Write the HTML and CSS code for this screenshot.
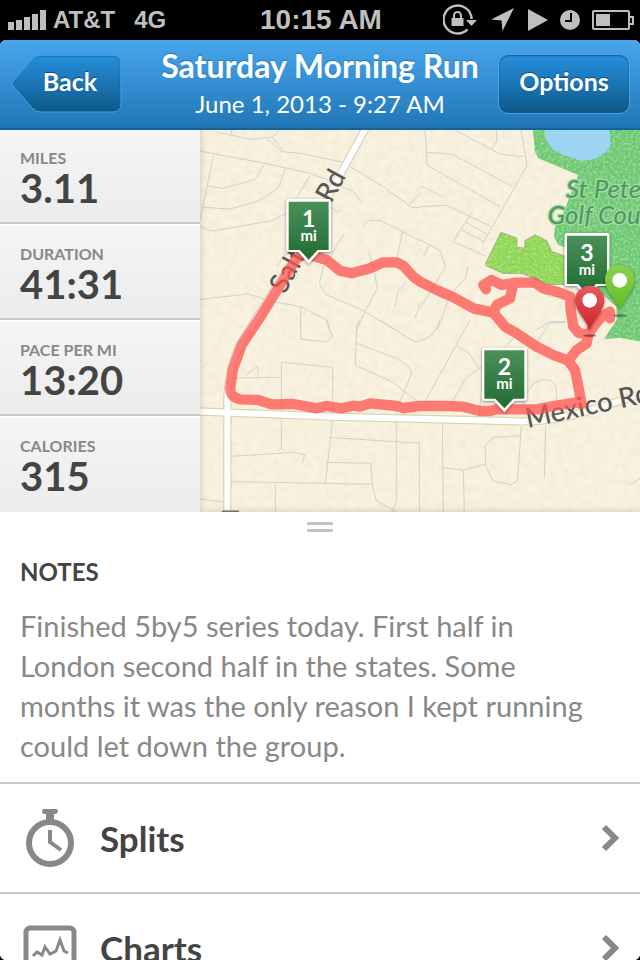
FILE: index.html
```html
<!DOCTYPE html>
<html lang="en">
<head>
<meta charset="utf-8">
<meta name="viewport" content="width=device-width, initial-scale=1">
<title>Saturday Morning Run</title>
<link rel="stylesheet" href="styles.css">
</head>
<body>
<div class="screen">
  <div class="status">
    <div class="status-left">
      <svg class="signal" width="38" height="20" viewBox="0 0 38 20" aria-hidden="true"><path d="M0 12h6v8H0zM8 10h6v10H8zM16 7h6v13h-6zM24 4h6v16h-6zM32 0h6v20h-6z"/></svg>
      <span>AT&amp;T</span>
      <span class="network">4G</span>
    </div>
    <div class="clock">10:15 AM</div>
    <div class="status-right">
      <svg width="36" height="32" viewBox="0 0 36 32" aria-hidden="true"><path d="M28.600 15A14 14 0 1 0 24.500 25.400" fill="none" stroke="#bfbfbf" stroke-width="2.400"/><path d="M23 16h11l-5.500 6z"/><path d="M8.500 14h12v8h-12z"/><path d="M11 14v-2.500a3.500 3.500 0 0 1 7 0V14" fill="none" stroke="#bfbfbf" stroke-width="2"/></svg>
      <svg width="25" height="24" viewBox="0 0 25 24" aria-hidden="true"><path d="M23 0L11.500 23L10.500 12.500L0 11.500z"/></svg>
      <svg width="20" height="22" viewBox="0 0 20 22" aria-hidden="true"><path d="M0 0l20 11L0 22z"/></svg>
      <svg width="20" height="20" viewBox="0 0 20 20" aria-hidden="true"><circle cx="10" cy="10" r="10"/><path d="M11 3v8H5" fill="none" stroke="#000" stroke-width="2"/></svg>
      <svg width="42" height="20" viewBox="0 0 42 20" aria-hidden="true"><rect x="1" y="1" width="36" height="18" rx="1" fill="none" stroke="#bfbfbf" stroke-width="2"/><path d="M4 4h14v12H4z"/><path d="M38 7h3v7h-3" fill="none" stroke="#bfbfbf" stroke-width="2"/></svg>
    </div>
  </div>

  <div class="app">
    <header class="navbar">
      <button class="back" type="button">
        <svg class="back-shape" viewBox="0 0 112 60" aria-hidden="true">
          <defs><linearGradient id="backFill" x2="0" y2="1"><stop stop-color="#268fdb"/><stop offset=".5" stop-color="#1b75b5"/><stop offset="1" stop-color="#0d5788"/></linearGradient></defs>
          <path d="M25 2.500Q28 1 31 1H103Q111 1 111 9V50Q111 58 103 58H31Q26 58 23 55L3 32Q1 30 3 27L21 6Q23 3.500 25 2.500Z" fill="url(#backFill)" stroke="#4aa3df" stroke-width="1"/>
          <path d="M25 4.500Q28 2.500 31 2.500H103Q109 2.500 109 9V50" fill="none" stroke="#1869a5" stroke-opacity=".6"/>
        </svg>
        <span class="back-label">Back</span>
      </button>
      <div class="heading">
        <h1>Saturday Morning Run</h1>
        <p>June 1, 2013 - 9:27 AM</p>
      </div>
      <button class="options" type="button">Options</button>
    </header>

    <section class="summary">
      <dl class="stats">
        <div class="stat"><dt>MILES</dt><dd>3.11</dd></div>
        <div class="stat"><dt>DURATION</dt><dd>41:31</dd></div>
        <div class="stat"><dt>PACE PER MI</dt><dd>13:20</dd></div>
        <div class="stat"><dt>CALORIES</dt><dd>315</dd></div>
      </dl>
      <div class="map">
        <svg class="map-art" viewBox="0 0 1320 1146" preserveAspectRatio="xMidYMid slice" role="img" aria-label="Map of the run">
          <defs>
            <linearGradient id="flagFill" x2="0" y2="1"><stop stop-color="#4a9159"/><stop offset="1" stop-color="#226b33"/></linearGradient>
            <linearGradient id="pinRed" x2="0" y2="1"><stop stop-color="#e85a5e"/><stop offset="1" stop-color="#cb2228"/></linearGradient>
            <linearGradient id="pinGreen" x2="0" y2="1"><stop stop-color="#8bd152"/><stop offset="1" stop-color="#62bd20"/></linearGradient>
            <filter id="shade" x="-20%" y="-20%" width="140%" height="150%"><feDropShadow dx="0" dy="3" stdDeviation="4" flood-opacity=".5"/></filter>
            <filter id="paper" x="0" y="0" width="100%" height="100%" color-interpolation-filters="sRGB"><feTurbulence type="fractalNoise" baseFrequency=".045" numOctaves="2" seed="4"/><feColorMatrix values="0 0 0 0 .85  0 0 0 0 .77  0 0 0 0 .58  0 1.400 0 0 -.5"/></filter>
            <filter id="grass" x="0" y="0" width="100%" height="100%" color-interpolation-filters="sRGB"><feTurbulence type="fractalNoise" baseFrequency=".13" numOctaves="2" seed="9" result="n"/><feColorMatrix values="0 0 0 0 .75  0 0 0 0 .95  0 0 0 0 .65  0 1.400 0 0 -.550"/><feComposite in2="SourceGraphic" operator="in" result="t"/><feMerge><feMergeNode in="SourceGraphic"/><feMergeNode in="t"/></feMerge></filter>
            <g id="flag">
              <path d="M-60-190H60Q67-190 67-183V-38Q67-31 60-31H31L0 4L-31-31H-60Q-67-31-67-38V-183Q-67-190-60-190Z" fill="#fff" filter="url(#shade)"/>
              <path d="M-60-182H60V-37H27L0-8L-27-37H-60Z" fill="url(#flagFill)"/>
            </g>
            <path id="pin" d="M0 0C-6-28-44-58-44-91A44 44 0 0 1 44-91C44-58 6-28 0 0Z"/>
          </defs>
          <rect width="1320" height="1146" fill="#f8f2e0"/>
          <rect width="1320" height="1146" filter="url(#paper)" opacity=".2"/>

          <g filter="url(#grass)">
            <path d="M998-9L1005 65L1015 85L1135 135L1090 250L1065 290L1062 320L1075 345L1095 352L1180 470L1250 530L1250 570L1212 627L1260 623L1330 636V-9Z" fill="#6cc676"/>
          </g>
          <path d="M903 308L950 325V352L975 355V333L1005 315L1040 333L1055 365L1092 378L1110 465H1045L970 430L910 430L855 405Z" fill="#8fd452" stroke="#a3ad7b" stroke-width="4" filter="url(#grass)"/>
          <path d="M1033-5L1038 30L1060 60L1090 75L1145 93L1190 85L1220 65L1232 45L1228-5Z" fill="#9dd3f3"/>

          <g class="street">
            <path d="M50 5L60 8L150 28L217 22L237 0M95 0V12M202 27L245 65L300 70L430 97L550 170L635 232H660M217 22L250 62M0 63L195 100L330 130L390 152L460 185L482 215M40 75L22 165L0 270M22 168L70 175L165 148L195 100M10 232L90 237L175 213L235 175L257 112M0 288L35 304L215 272L258 250M330 135L292 200M628 225L660 190M390 230L415 247L425 237M490 288L505 271H540L660 332M607 305L592 382M432 312L390 380L370 410L358 460L375 492L490 542L585 600M505 367L520 405L532 475L495 545L470 600M620 455L595 482L585 530M660 520L645 565M0 508L145 492L220 515L302 530V600M302 530L380 570L388 600M288 370L250 375L232 412M275 435L292 445"/>
            <path transform="translate(660)" d="M15 0L20 65V105L240 230M20 67L97 73L278 170M105 0L240 72L310 80M230 0V35L213 60M303 0L321 107L187 343M0 175L10 170L72 203M0 230L80 226L215 290M152 252L100 335L195 377M137 277L203 313M124 300L190 333M0 330L60 362L77 410L0 535M27 347L10 380M145 408L137 445L90 495L52 600M350 480L390 500H440M350 600L390 575H438"/>
            <path transform="translate(0 570)" d="M302 0V58L380 65L397 52L380 0M480 0L470 20L466 135L580 187L655 247M470 70L590 115Q635 140 635 160L598 250M540 0L642 65H660M103 174L240 172M138 165L172 139L176 165M244 385V127L398 142V300L376 493M235 393L244 383L252 393M90 409L282 397L314 404L307 430M90 485L370 490L517 493M226 490V580M386 352L660 370M376 427L512 430L517 493L528 540L590 577M589 265V545L575 577M658 365V580M0 538L70 545M0 122L5 122"/>
            <path transform="translate(660 570)" d="M0 60Q40 60 60 0M150 0L15 245M110 78L142 95L177 145L138 175L92 255M177 145L205 135L285 50M178 290L182 235M310 257L312 230L340 190L365 180H390L407 198L412 245M340 85L390 8H435M67 305L70 580M70 443L130 450L195 433L219 483L275 494L292 483L305 310M130 450L133 580M303 347L222 352L196 375V433M377 320L373 475M632 495L660 475"/>
          </g>

          <g class="road-edge"><path d="M-10 844L400 860L920 873Q1050 880 1160 845L1330 790M82 1160V830Q80 720 125 635L285 380L505-20"/></g>
          <g class="road"><path d="M-10 844L400 860L920 873Q1050 880 1160 845L1330 790M82 1160V830Q80 720 125 635L285 380L505-20"/></g>
          <path d="M66 1144H117" stroke="#777" stroke-width="5"/>
          <g class="road-name">
            <text transform="translate(254 494) rotate(-61)">Salt</text>
            <text transform="translate(393 222) rotate(-61)">Rd</text>
            <text transform="translate(983 894) rotate(-12)">Mexico Rd</text>
          </g>
          <g class="park-name"><text x="1098" y="205">St Peters</text><text x="1043" y="281">Golf Course</text></g>

          <path class="route" d="M340 378L380 390L420 422L455 430L510 415L550 397H590L610 407L640 440L660 455L710 480L760 502L820 535L880 548L900 572L915 590L950 610L1010 650L1060 675L1105 692L1125 720L1135 770L1145 822L1130 817L1060 828L1010 838H890L870 843H840L790 830L740 828L660 828L610 834L590 828L510 820L480 830L460 827L425 835L380 828L350 835L280 822L215 823L175 810L120 808Q85 800 92 765L98 720L125 645L175 570L290 385L310 375M880 548L890 525L930 505L938 470L945 458M858 478L850 465L875 450L905 465L945 458H1005L1030 475L1070 485L1110 500L1112 540L1120 590L1135 608L1165 615L1180 590L1205 560L1230 545V565M1165 615L1160 640L1130 660L1105 692"/>

          <use href="#flag" x="326" y="397"/>
          <use href="#flag" x="913" y="843"/>
          <use href="#flag" x="1161" y="499"/>
          <g class="flag-text">
            <text class="flag-number" x="326" y="290">1</text><text class="flag-unit" x="326" y="332">mi</text>
            <text class="flag-number" x="913" y="735">2</text><text class="flag-unit" x="913" y="777">mi</text>
            <text class="flag-number" x="1161" y="392">3</text><text class="flag-unit" x="1161" y="434">mi</text>
          </g>
          <ellipse cx="1259" cy="557" rx="20" ry="4" opacity=".4"/>
          <use href="#pin" x="1259" y="540" fill="url(#pinGreen)" filter="url(#shade)"/><circle cx="1259" cy="451" r="22" fill="#fff"/>
          <ellipse cx="1169" cy="617" rx="20" ry="4" opacity=".4"/>
          <use href="#pin" x="1169" y="602" fill="url(#pinRed)" filter="url(#shade)"/><circle cx="1169" cy="511" r="22" fill="#fff"/>
        </svg>
      </div>
    </section>

    <main class="details">
      <div class="grip" aria-hidden="true"></div>
      <section class="notes">
        <h2>NOTES</h2>
        <p>Finished 5by5 series today. First half in London second half in the states. Some months it was the only reason I kept running could let down the group.</p>
      </section>
      <nav>
        <a class="row" href="#splits">
          <svg class="row-icon" width="60" height="60" viewBox="0 0 60 60" aria-hidden="true"><g fill="none" stroke="#888" stroke-width="6"><circle cx="30" cy="35" r="21"/><path d="M30 22V34L41 42" stroke-width="4"/></g><path d="M24 1H36Q38 1 38 3T36 6H34V14H26V6H24Q22 6 22 3.500T24 1Z" fill="#888"/></svg>
          <span class="row-label">Splits</span>
          <svg class="chevron" width="20" height="28" viewBox="0 0 20 28" aria-hidden="true"><path d="M4 3L15 14L4 25" fill="none" stroke="#888" stroke-width="6"/></svg>
        </a>
        <a class="row" href="#charts">
          <svg class="row-icon" width="60" height="60" viewBox="0 0 60 60" aria-hidden="true"><rect x="6" y="10" width="48" height="46" rx="4" fill="none" stroke="#888" stroke-width="5"/><path d="M13 38L17 34L22 37L25 29L30 36L36 33L40 22L44 33L48 35" fill="none" stroke="#888" stroke-width="3"/></svg>
          <span class="row-label">Charts</span>
          <svg class="chevron" width="20" height="28" viewBox="0 0 20 28" aria-hidden="true"><path d="M4 3L15 14L4 25" fill="none" stroke="#888" stroke-width="6"/></svg>
        </a>
      </nav>
    </main>
  </div>
</div>
</body>
</html>
```
FILE: styles.css
```css
* { box-sizing: border-box; }
body, h1, h2, p, dl, dd { margin: 0; }
body { background: #000; font-family: Lato, "Liberation Sans", sans-serif; color: #444; }
.screen { height: 100vh; display: flex; flex-direction: column; overflow: hidden; }

.status {
  flex: none; height: 40px; padding: 0 6px 0 8px;
  display: grid; grid-template-columns: 1fr auto 1fr; align-items: center;
  background: #000; color: #bfbfbf; font: bold 24px/38px "Liberation Sans", sans-serif;
}
.status svg { fill: #bfbfbf; }
.status-left, .status-right { display: flex; align-items: center; }
.status-left { gap: 7px; }
.network { margin-left: 12px; }
.clock { font-size: 28px; }
.status-right { justify-content: flex-end; gap: 12px; }

.app { flex: 1; min-height: 0; border-radius: 6px; overflow: hidden; background: #fff; }

.navbar {
  height: 90px; padding: 0 10px;
  display: grid; grid-template-columns: 1fr auto 1fr; align-items: center;
  background: linear-gradient(#48a5ec, #2077b7); border-bottom: 2px solid #14619d; color: #fff;
}
.navbar button { font: bold 25px/30px Lato, sans-serif; color: #fff; text-shadow: 0 -1px 1px #0a4c7c; height: 60px; }
.back { position: relative; width: 112px; padding: 0 0 6px 8px; border: 0; background: none; }
.back-shape { position: absolute; inset: 0; width: 100%; height: 100%; }
.back-label { position: relative; }
.options {
  justify-self: end; width: 132px; padding: 0 0 6px;
  border: 1px solid #4aa3df; border-radius: 10px;
  background: linear-gradient(#268fdb, #1b75b5 50%, #0d5788);
  box-shadow: inset 0 1px 2px #12598f;
}
.heading { text-align: center; }
.heading h1 { font-size: 32px; line-height: 40px; text-shadow: 0 -1px 1px #2278b5; }
.heading p { font-size: 24px; line-height: 36px; }

.summary { display: flex; }
.stats { flex: none; width: 200px; }
.stat {
  height: 96px; padding: 18px 20px 0;
  background: linear-gradient(#f5f5f5, #ececec);
  border-top: 2px solid #fff; border-bottom: 2px solid #c8c8c8;
}
.stat:first-child { height: 94px; border-top: 0; }
.stat:last-child { border-bottom: 0; }
.stat dt { font-size: 16px; line-height: 20px; font-weight: bold; color: #888; }
.stat dd { font-size: 40px; line-height: 40px; font-weight: bold; }
.map { flex: 1; min-width: 0; position: relative; }
.map::after { content: ""; position: absolute; inset: 0; box-shadow: inset 5px -5px 6px -4px rgba(90, 75, 30, .2); }
.map-art { position: absolute; width: 100%; height: 100%; }

.street { fill: none; stroke: #cdd2d0; stroke-width: 3; }
.road-edge { fill: none; stroke: #d9d3b4; stroke-width: 25; }
.road { fill: none; stroke: #fff; stroke-width: 18; }
.road-name { font-size: 82px; font-weight: 500; fill: #555; stroke: #f8f1dd; stroke-width: 6; paint-order: stroke; }
.park-name { font-size: 77px; font-style: italic; font-weight: 500; fill: #4e9a61; stroke: #a5dba4; stroke-width: 8; paint-order: stroke; }
.route { fill: none; stroke: #ff524d; stroke-opacity: .75; stroke-width: 31; stroke-linecap: round; stroke-linejoin: round; }
.flag-text { fill: #fff; font-weight: bold; text-anchor: middle; }
.flag-number { font-size: 69px; }
.flag-unit { font-size: 45px; }

.details { position: relative; background: #fff; }
.grip { width: 26px; height: 10px; margin: 0 auto; position: relative; top: 10px; border: solid #c4c4c4; border-width: 3px 0; border-radius: 1px; }
.notes { padding: 32px 50px 16px 20px; }
.notes h2 { font-size: 24px; line-height: 36px; }
.notes p { margin-top: 16px; font-size: 29px; line-height: 40px; color: #888; }
.row {
  display: flex; align-items: center; height: 110px; padding: 0 20px;
  border-top: 2px solid #c8c8c8; color: #444; text-decoration: none;
}
.row-label { flex: 1; margin-left: 20px; font-size: 35px; line-height: 44px; font-weight: bold; }
```
